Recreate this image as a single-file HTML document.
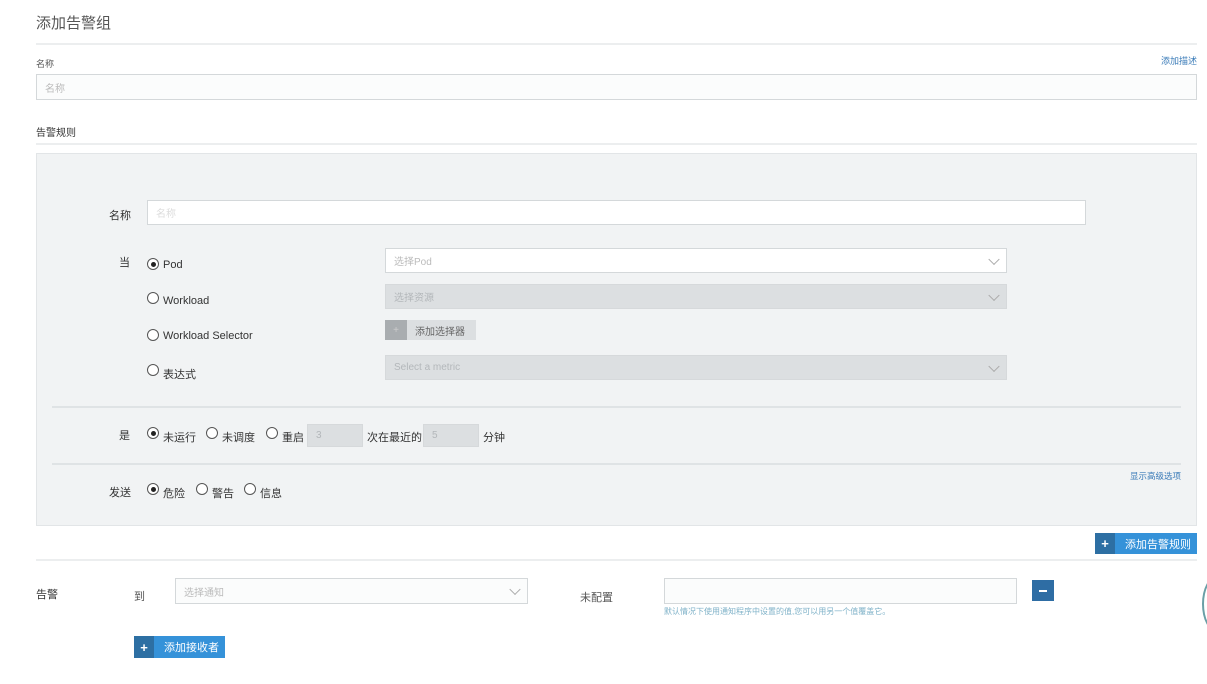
<!DOCTYPE html>
<html><head><meta charset="utf-8">
<style>
*{box-sizing:border-box;margin:0;padding:0}
body{width:1207px;height:684px;background:#fff;position:relative;overflow:hidden;font-family:"Liberation Sans","Noto Sans CJK SC",sans-serif;color:#333}
.a{position:absolute;white-space:nowrap}
.hr{position:absolute;height:2px;background:#eceeef}
.in{position:absolute;border:1px solid #d4d8da;background:#fff;font-size:10px;color:#bbb;padding-left:8px;display:flex;align-items:center}
.g{background:#dcdfe1;border-color:#d6d9db;color:#b3b7ba}
.chev{position:absolute;right:8px;top:50%;width:8px;height:8px;border-right:1px solid #aaa;border-bottom:1px solid #aaa;transform:translateY(-70%) rotate(45deg)}
.r{position:absolute;width:12px;height:12px;border:1px solid #555;border-radius:50%;background:#fff}
.r.on::after{content:"";position:absolute;left:2.5px;top:2.5px;width:5px;height:5px;border-radius:50%;background:#222}
.t{font-size:11px;color:#333}
.btn{position:absolute;background:#3592d9;color:#fff;font-size:11px;display:flex;align-items:center}
.btn .p{width:20px;height:100%;background:#2d6fa3;display:flex;align-items:center;justify-content:center;font-weight:bold;font-size:13px;margin-right:10px}
</style></head><body>
<div class="a" style="left:36px;top:12px;font-size:15px;color:#555">添加告警组</div>
<div class="hr" style="left:36px;top:43px;width:1161px"></div>
<div class="a" style="left:36px;top:57px;font-size:9px;color:#555">名称</div>
<div class="a" style="left:1161px;top:54px;font-size:9px;color:#3a7bb8">添加描述</div>
<div class="in" style="left:36px;top:74px;width:1161px;height:26px;background:#fbfcfc;color:#bbb">名称</div>
<div class="a" style="left:36px;top:124px;font-size:10px;color:#333">告警规则</div>
<div class="hr" style="left:36px;top:143px;width:1161px"></div>

<div style="position:absolute;left:36px;top:153px;width:1161px;height:373px;background:#f1f3f4;border:1px solid #e2e5e7"></div>
<div class="a t" style="left:109px;top:207px">名称</div>
<div class="in" style="left:147px;top:200px;width:939px;height:25px;color:#ddd">名称</div>

<div class="a t" style="left:119px;top:254px">当</div>
<div class="r on" style="left:147px;top:258px"></div><div class="a t" style="left:163px;top:259px">Pod</div>
<div class="in" style="left:385px;top:248px;width:622px;height:25px">选择Pod<span class="chev"></span></div>
<div class="r" style="left:147px;top:292px"></div><div class="a t" style="left:163px;top:295px">Workload</div>
<div class="in g" style="left:385px;top:284px;width:622px;height:25px">选择资源<span class="chev"></span></div>
<div class="r" style="left:147px;top:329px"></div><div class="a t" style="left:163px;top:330px">Workload Selector</div>
<div style="position:absolute;left:385px;top:320px;width:91px;height:20px;background:#dcdfe1;display:flex;align-items:center;font-size:10px;color:#666"><span style="width:22px;height:100%;background:#a9adb0;color:#ccc;display:flex;align-items:center;justify-content:center;margin-right:8px">+</span>添加选择器</div>
<div class="r" style="left:147px;top:364px"></div><div class="a t" style="left:163px;top:366px">表达式</div>
<div class="in g" style="left:385px;top:355px;width:622px;height:25px">Select a metric<span class="chev"></span></div>

<div class="hr" style="left:52px;top:406px;width:1129px;background:#dfe3e5"></div>
<div class="a t" style="left:119px;top:427px">是</div>
<div class="r on" style="left:147px;top:427px"></div><div class="a t" style="left:163px;top:429px">未运行</div>
<div class="r" style="left:206px;top:427px"></div><div class="a t" style="left:222px;top:429px">未调度</div>
<div class="r" style="left:266px;top:427px"></div><div class="a t" style="left:282px;top:429px">重启</div>
<div class="in g" style="left:307px;top:424px;width:56px;height:23px">3</div>
<div class="a t" style="left:367px;top:429px">次在最近的</div>
<div class="in g" style="left:423px;top:424px;width:56px;height:23px">5</div>
<div class="a t" style="left:483px;top:429px">分钟</div>
<div class="hr" style="left:52px;top:463px;width:1129px;background:#dfe3e5"></div>
<div class="a" style="left:1130px;top:470px;font-size:8.5px;color:#3a7bb8">显示高级选项</div>
<div class="a t" style="left:109px;top:484px">发送</div>
<div class="r on" style="left:147px;top:483px"></div><div class="a t" style="left:163px;top:485px">危险</div>
<div class="r" style="left:196px;top:483px"></div><div class="a t" style="left:212px;top:485px">警告</div>
<div class="r" style="left:244px;top:483px"></div><div class="a t" style="left:260px;top:485px">信息</div>

<div class="btn" style="left:1095px;top:533px;width:102px;height:21px"><span class="p">+</span>添加告警规则</div>
<div class="hr" style="left:36px;top:559px;width:1161px"></div>

<div class="a t" style="left:36px;top:586px">告警</div>
<div class="a t" style="left:134px;top:588px;color:#555">到</div>
<div class="in" style="left:175px;top:578px;width:353px;height:26px;background:#fbfcfc">选择通知<span class="chev"></span></div>
<div class="a t" style="left:580px;top:589px;color:#555">未配置</div>
<div class="in" style="left:664px;top:578px;width:353px;height:26px;background:#fbfcfc"></div>
<div style="position:absolute;left:1032px;top:580px;width:22px;height:21px;background:#2e6da4"><div style="position:absolute;left:7px;top:10px;width:8px;height:2px;background:#fff"></div></div>
<div class="a" style="left:664px;top:606px;font-size:8px;color:#7fb2c8">默认情况下使用通知程序中设置的值,您可以用另一个值覆盖它。</div>
<div class="btn" style="left:134px;top:636px;width:91px;height:22px"><span class="p">+</span>添加接收者</div>
<div style="position:absolute;left:1202px;top:576px;width:30px;height:56px;border:2px solid #6a9fa6;border-radius:50%"></div>
</body></html>
